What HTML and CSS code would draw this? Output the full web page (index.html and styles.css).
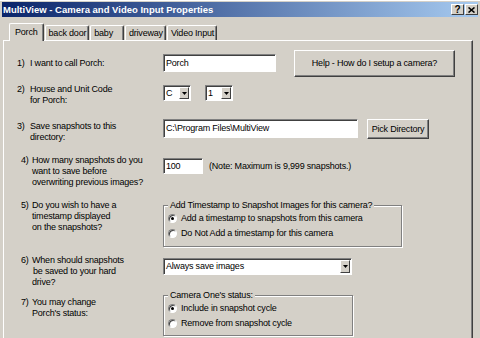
FILE: index.html
```html
<!DOCTYPE html>
<html lang="en">
<head>
  <meta charset="UTF-8">
  <title>MultiView - Camera and Video Input Properties</title>
  <link rel="stylesheet" href="styles.css">
</head>
<body>
  <div class="window">
    <div class="titlebar">
      <span class="title">MultiView - Camera and Video Input Properties</span>
      <div class="caption-buttons">
        <span class="cap-btn">?</span>
        <span class="cap-btn">
          <svg width="7" height="6" viewBox="0 0 7 6"><path d="M0.5 0.5L6.5 5.5M6.5 0.5L0.5 5.5" stroke="#000" stroke-width="1.6"/></svg>
        </span>
      </div>
    </div>

    <div class="tabs">
      <span class="tab active">Porch</span>
      <span class="tab">back door</span>
      <span class="tab tab-baby">baby</span>
      <span class="tab">driveway</span>
      <span class="tab">Video Input</span>
    </div>

    <div class="panel">
      <div class="row row-name">
        <div class="lbl"><span class="num">1)</span><span class="text">I want to call Porch:</span></div>
        <div class="ctrl">
          <div class="field name-field">Porch</div>
          <div class="btn help-btn">Help - How do I setup a camera?</div>
        </div>
      </div>

      <div class="row row-code">
        <div class="lbl"><span class="num">2)</span><span class="text">House and Unit Code<br>for Porch:</span></div>
        <div class="ctrl">
          <div class="select small-select"><span class="value">C</span><span class="arrow"><svg width="5" height="3" viewBox="0 0 5 3"><path d="M0 0H5L2.5 3Z" fill="#000"/></svg></span></div>
          <div class="select small-select"><span class="value">1</span><span class="arrow"><svg width="5" height="3" viewBox="0 0 5 3"><path d="M0 0H5L2.5 3Z" fill="#000"/></svg></span></div>
        </div>
      </div>

      <div class="row row-dir">
        <div class="lbl"><span class="num">3)</span><span class="text">Save snapshots to this<br>directory:</span></div>
        <div class="ctrl">
          <div class="field dir-field">C:\Program Files\MultiView</div>
          <div class="btn pick-btn">Pick Directory</div>
        </div>
      </div>

      <div class="row row-count">
        <div class="lbl shifted"><span class="num">4)</span><span class="text">How many snapshots do you<br>want to save before<br>overwriting previous images?</span></div>
        <div class="ctrl">
          <div class="field count-field">100</div>
          <span class="note">(Note: Maximum is 9,999 snapshots.)</span>
        </div>
      </div>

      <div class="row row-stamp">
        <div class="lbl shifted"><span class="num">5)</span><span class="text">Do you wish to have a<br>timestamp displayed<br>on the snapshots?</span></div>
        <div class="ctrl">
          <fieldset class="group stamp-group">
            <legend>Add Timestamp to Snapshot Images for this camera?</legend>
            <div class="option"><span class="radio checked"></span>Add a timestamp to snapshots from this camera</div>
            <div class="option"><span class="radio"></span>Do Not Add a timestamp for this camera</div>
          </fieldset>
        </div>
      </div>

      <div class="row row-save">
        <div class="lbl shifted"><span class="num">6)</span><span class="text">When should snapshots<br><span class="indent">be saved to your hard</span><br>drive?</span></div>
        <div class="ctrl">
          <div class="select wide-select"><span class="value">Always save images</span><span class="arrow"><svg width="5" height="3" viewBox="0 0 5 3"><path d="M0 0H5L2.5 3Z" fill="#000"/></svg></span></div>
        </div>
      </div>

      <div class="row row-status">
        <div class="lbl shifted"><span class="num">7)</span><span class="text">You may change<br>Porch's status:</span></div>
        <div class="ctrl">
          <fieldset class="group status-group">
            <legend>Camera One's status:</legend>
            <div class="option"><span class="radio checked"></span>Include in snapshot cycle</div>
            <div class="option"><span class="radio"></span>Remove from snapshot cycle</div>
          </fieldset>
        </div>
      </div>
    </div>
  </div>
</body>
</html>
```

FILE: styles.css
```css
body {
  margin: 0;
  background: #d4d0c8;
  font-family: "Liberation Sans", Arial, sans-serif;
  font-size: 9px;
  letter-spacing: -0.2px;
  color: #000;
}

.window {
  width: 480px;
  height: 338px;
  overflow: hidden;
  border-top: 1px solid #fff;
  box-sizing: border-box;
}

.titlebar {
  height: 15px;
  margin: 1px 2px 0 2px;
  padding: 0 0 0 1px;
  background: linear-gradient(to right, #0a246a, #a6caf0);
  display: flex;
  align-items: center;
  justify-content: space-between;
}

.title {
  color: #fff;
  font-weight: bold;
  font-size: 9.5px;
  letter-spacing: 0;
}

.caption-buttons {
  display: flex;
  gap: 1px;
}

.cap-btn {
  width: 11px;
  height: 9px;
  background: #d4d0c8;
  border-top: 1px solid #fff;
  border-left: 1px solid #fff;
  border-right: 1px solid #404040;
  border-bottom: 1px solid #404040;
  display: flex;
  align-items: center;
  justify-content: center;
  font-weight: bold;
  font-size: 10px;
  line-height: 9px;
}

.tabs {
  display: flex;
  align-items: flex-end;
  height: 17px;
  margin-top: 6px;
  padding-left: 9px;
  position: relative;
  z-index: 1;
}

.tab {
  height: 14px;
  line-height: 14px;
  padding: 0 2px 0 3px;
  margin-right: 1px;
  border-top: 1px solid #fff;
  border-left: 1px solid #fff;
  border-right: 1px solid #404040;
  border-radius: 2px 2px 0 0;
  background: #d4d0c8;
  box-shadow: inset -1px 0 0 #808080;
}

.tab.active {
  height: 17px;
  line-height: 16px;
  padding: 0 5px;
  margin-bottom: -1px;
}

.tab-baby {
  padding-right: 10px;
}

.panel {
  margin-left: 3px;
  width: 470px;
  height: 300px;
  box-sizing: border-box;
  border-top: 1px solid #fff;
  border-left: 1px solid #fff;
  border-right: 1px solid #404040;
  box-shadow: inset -1px 0 0 #808080;
  padding: 8px 0 0 13px;
}

.row {
  display: grid;
  grid-template-columns: 146px 1fr;
  align-items: start;
}

.lbl {
  display: flex;
  line-height: 11px;
  white-space: nowrap;
}

.num {
  width: 13px;
  flex: none;
}

.lbl.shifted .num {
  padding-left: 4px;
  width: 11px;
}

.indent {
  padding-left: 1px;
}

.ctrl {
  display: flex;
  align-items: flex-start;
}

.field {
  height: 17px;
  line-height: 16px;
  box-sizing: border-box;
  background: #fff;
  padding-left: 2px;
  border-top: 1px solid #808080;
  border-left: 1px solid #808080;
  border-right: 1px solid #fff;
  border-bottom: 1px solid #fff;
  box-shadow: inset 1px 1px 0 #404040;
  white-space: nowrap;
  overflow: hidden;
}

.btn {
  box-sizing: border-box;
  display: flex;
  align-items: center;
  justify-content: center;
  background: #d4d0c8;
  border-top: 1px solid #fff;
  border-left: 1px solid #fff;
  border-right: 1px solid #404040;
  border-bottom: 1px solid #404040;
  box-shadow: inset -1px -1px 0 #808080;
  white-space: nowrap;
}

.row-name {
  height: 28px;
  align-items: center;
}

.row-name .ctrl {
  align-items: center;
}

.name-field {
  width: 113px;
  height: 18px;
}

.help-btn {
  width: 161px;
  height: 27px;
  margin-left: 18px;
}

.row-code {
  margin-top: 7px;
}

.select {
  height: 16px;
  box-sizing: border-box;
  background: #fff;
  display: flex;
  align-items: stretch;
  justify-content: space-between;
  border-top: 1px solid #808080;
  border-left: 1px solid #808080;
  border-right: 1px solid #fff;
  border-bottom: 1px solid #fff;
  box-shadow: inset 1px 1px 0 #404040;
  margin-top: 1px;
}

.select .value {
  padding-left: 2px;
  line-height: 14px;
  white-space: nowrap;
}

.select .arrow {
  width: 10px;
  margin: 1px 1px 1px 0;
  box-sizing: border-box;
  display: flex;
  align-items: center;
  justify-content: center;
  background: #d4d0c8;
  border-top: 1px solid #fff;
  border-left: 1px solid #fff;
  border-right: 1px solid #404040;
  border-bottom: 1px solid #404040;
}

.small-select {
  width: 28px;
  margin-right: 14px;
}

.row-dir {
  margin-top: 13px;
}

.row-dir .lbl {
  padding-top: 2px;
}

.dir-field {
  width: 195px;
  height: 19px;
  line-height: 17px;
}

.pick-btn {
  width: 62px;
  height: 20px;
  margin-left: 9px;
}

.row-count {
  margin-top: 12px;
}

.count-field {
  width: 40px;
  height: 16px;
  line-height: 14px;
  margin-top: 3px;
}

.note {
  margin-left: 6px;
  margin-top: 6px;
  line-height: 11px;
}

.row-stamp {
  margin-top: 12px;
}

.group {
  margin: 0;
  padding: 0 0 4px 4px;
  min-width: 0;
  box-sizing: border-box;
  border: 1px solid #808080;
  box-shadow: 1px 1px 0 #fff, inset 1px 1px 0 #fff;
}

.group legend {
  padding: 0 2px;
  line-height: 11px;
  background: #d4d0c8;
  white-space: nowrap;
}

.stamp-group {
  width: 239px;
  height: 47px;
}

.option {
  display: flex;
  align-items: center;
  height: 15px;
  line-height: 11px;
  white-space: nowrap;
}

.radio {
  width: 9px;
  height: 9px;
  box-sizing: border-box;
  border-radius: 50%;
  background: #fff;
  border: 1px solid;
  border-color: #808080 #fff #fff #808080;
  box-shadow: inset 1px 1px 0 #404040;
  margin-right: 4px;
  position: relative;
  flex: none;
}

.radio.checked::after {
  content: "";
  position: absolute;
  left: 2px;
  top: 2px;
  width: 3px;
  height: 3px;
  border-radius: 50%;
  background: #000;
}

.row-save {
  margin-top: 8px;
}

.wide-select {
  width: 189px;
  height: 17px;
  margin-top: 3px;
}

.row-status {
  margin-top: 2px;
}

.row-status .lbl {
  padding-top: 7px;
}

.status-group {
  width: 190px;
  height: 46px;
  padding-bottom: 3px;
}
```
